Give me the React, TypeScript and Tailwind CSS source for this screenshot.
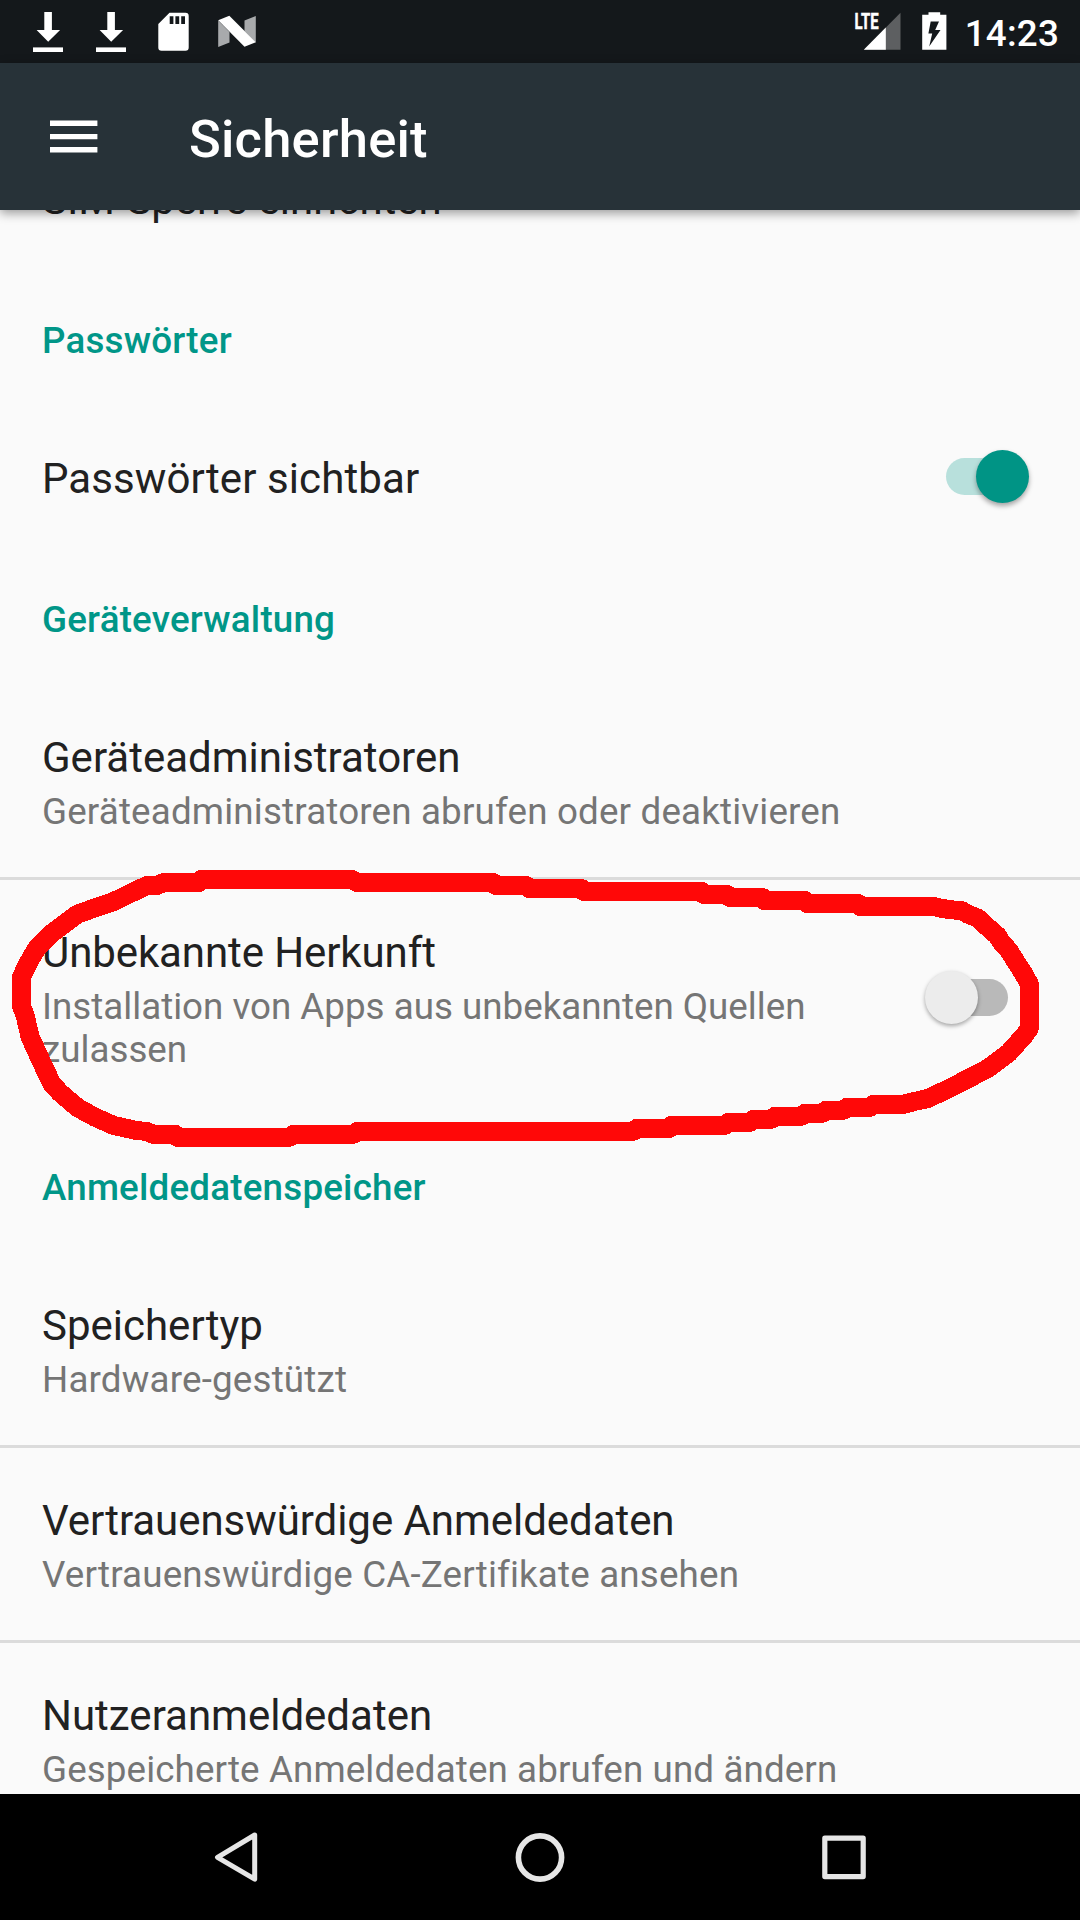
import React from "react";

function Download() {
  return (
    <svg className="h-[40px] w-[30px]" viewBox="0 0 30 40" fill="#fff">
      <path d="M11.3 0h7.6v18h8.2L15.2 29.8 3.6 18h7.7z" />
      <path d="M0 35.4h30v4.6H0z" />
    </svg>
  );
}

function StatusBar() {
  return (
    <header className="flex h-[63px] shrink-0 items-start bg-[#14181b] text-white">
      <div className="flex pt-3 pl-[33px]">
        <Download />
        <div className="ml-[33px]">
          <Download />
        </div>
        <svg className="ml-[32px] h-[39px] w-[31px]" viewBox="0 0 31 39">
          <path
            fill="#fff"
            fillRule="evenodd"
            d="M11.5.8H27.5Q30.7.8 30.7 4V35.5Q30.7 38.7 27.5 38.7H3.5Q.3 38.7.3 35.5V12zM11.7 4.3v7.8h3.7V4.3zM17.4 4.3v7.8h3.8V4.3zM23.2 4.3v7.8H27V4.3z"
          />
        </svg>
        <svg className="ml-[28px] h-[39px] w-[40px]" viewBox="0 0 40 39">
          <path fill="#a8aaac" d="M1.2 8.5 12.5 20V30.5L1.2 35zM38.8 4 27.5 8.5V19L38.8 30.5z" />
          <path fill="#fff" d="M1.2 8.3 12.3 3.8 38.8 30.3 27.5 34.8z" />
        </svg>
      </div>
      <div className="ml-auto flex">
        <svg className="mt-3 h-[40px] w-[48px] overflow-visible" viewBox="0 0 48 40">
          <path fill="#5d5f61" d="M46.5.8V37.7H9.8z" />
          <path fill="#fff" d="M31.8 15.5V37.7H9.8z" />
          <path fill="#14181b" d="M0 0h26v19H0z" />
          <text
            x="0.6"
            y="17.4"
            textLength="24"
            lengthAdjust="spacingAndGlyphs"
            fill="#fff"
            stroke="#fff"
            strokeWidth="0.5"
            fontFamily="Roboto, sans-serif"
            fontWeight="700"
            fontSize="22"
          >
            LTE
          </text>
        </svg>
        <svg className="mt-3 ml-[20px] h-[39px] w-[25px]" viewBox="0 0 25 39">
          <path
            fill="#fff"
            fillRule="evenodd"
            d="M6.5.2h11.7v2.6H24.4V37.8H.2V2.8H6.5zM8.7 9.5 6.4 21.5H10.2L7.2 34.5 18.5 18H13.2L17 9.5z"
          />
        </svg>
        <span className="mt-[12px] mr-[21px] ml-[18px] text-[36.75px] leading-[43px] font-medium tracking-[0.2px]">
          14:23
        </span>
      </div>
    </header>
  );
}

function Toggle({ on }: { on?: boolean }) {
  return (
    <div className={on ? "relative mr-[51px] h-[53px] w-[83px]" : "relative mr-[72px] h-[53px] w-[83px]"}>
      <div
        className={
          on
            ? "absolute top-2 left-0 h-[37px] w-[62px] rounded-full bg-[#b8e0dc]"
            : "absolute top-2 right-0 h-[37px] w-[62px] rounded-full bg-[#b9b9b9]"
        }
      />
      <div
        className={
          on
            ? "absolute top-0 right-0 size-[53px] rounded-full bg-[#009485] shadow-[0_3px_5px_rgba(0,0,0,0.35)]"
            : "absolute top-0 left-0 size-[53px] rounded-full bg-[#ececec] shadow-[0_2px_4px_rgba(0,0,0,0.35)]"
        }
      />
    </div>
  );
}

function Category({ children }: { children: React.ReactNode }) {
  return (
    <h2 className="h-[126px] shrink-0 pt-[42px] pl-[42px] text-[36.75px] leading-[43px] font-medium tracking-[0.2px] text-[#009688]">
      {children}
    </h2>
  );
}

function Preference({
  title,
  summary,
  divider,
  height,
  titleTracking = "",
  summaryTracking = "",
  children,
}: {
  title: string;
  summary?: string;
  divider?: boolean;
  height: string;
  titleTracking?: string;
  summaryTracking?: string;
  children?: React.ReactNode;
}) {
  return (
    <section
      className={`flex shrink-0 items-start justify-between ${height} ${divider ? "border-t-3 border-[#dbdbdb] pt-[45px]" : "pt-[48px]"}`}
    >
      <div className="w-[860px] pl-[42px]">
        <div className={`text-[42px] leading-[56px] text-[#212121] ${titleTracking}`}>{title}</div>
        {summary && (
          <div className={`mt-1 text-[36.75px] leading-[43px] text-[#757575] ${summaryTracking}`}>{summary}</div>
        )}
      </div>
      {children}
    </section>
  );
}

const MARK =
  "440,77 470,77 490,68 595,68 603,59 1058,59 1072,68 1480,68 1488,77 1580,77 1588,86 1745,86 1752,95 2106,95 2112,104 2182,104 2190,113 2288,113 2294,122 2415,122 2422,131 2575,131 2582,140 2805,140 2820,144 2850,149 2885,152 2905,163 2933,174 2961,200 2993,228 3003,245 3027,272 3047,304 3070,340 3088,372 3088,505 3074,525 3026,579 2964,625 2897,660 2838,690 2782,716 2745,724 2710,733 2620,733 2610,742 2540,742 2530,751 2478,751 2468,760 2415,760 2405,769 2325,769 2315,778 2260,778 2250,787 2185,787 2175,796 2015,796 2008,805 1910,805 1900,814 1072,814 1060,823 880,823 868,832 532,832 525,823 460,823 440,814 412,812 340,796 282,770 233,743 180,698 155,670 131,620 90,530 75,465 65,440 65,350 85,308 112,262 150,224 190,194 231,163 270,149 340,125 375,108";

export default function App() {
  return (
    <div className="relative flex h-[1920px] w-[1080px] flex-col overflow-hidden bg-[#fafafa] font-['Roboto',sans-serif]">
      <StatusBar />
      <div className="relative z-10 flex h-[147px] shrink-0 items-start bg-[#273238] shadow-[0_3px_10px_rgba(0,0,0,0.4)]">
        <svg className="mt-[57px] ml-[50px] h-[33px] w-[48px]" viewBox="0 0 48 33" fill="#fff">
          <path d="M0 .4h47.4v5.5H0zM0 13.9h47.4v5.4H0zM0 27h47.4v5.5H0z" />
        </svg>
        <h1 className="mt-[46px] ml-[91px] text-[52.5px] leading-[60px] font-medium tracking-[0.22px] text-white">
          Sicherheit
        </h1>
      </div>

      <main className="flex min-h-0 flex-1 flex-col overflow-hidden">
        <div className="-mt-[38px] h-[105px] shrink-0 pl-[42px] text-[42px] leading-[56px] tracking-[-0.05px] text-[#212121]">
          SIM-Sperre einrichten
        </div>
        <Category>Passwörter</Category>
        <Preference title="Passwörter sichtbar" height="h-[153px]" titleTracking="tracking-[0.1px]">
          <div className="-mt-px">
            <Toggle on />
          </div>
        </Preference>
        <Category>Geräteverwaltung</Category>
        <Preference
          title="Geräteadministratoren"
          summary="Geräteadministratoren abrufen oder deaktivieren"
          height="h-[195px]"
          summaryTracking="tracking-[0.17px]"
        />
        <Preference
          title="Unbekannte Herkunft"
          summary="Installation von Apps aus unbekannten Quellen zulassen"
          height="h-[247px]"
          titleTracking="tracking-[-0.1px]"
          divider
        >
          <div className="mt-[46px]">
            <Toggle />
          </div>
        </Preference>
        <Category>Anmeldedatenspeicher</Category>
        <Preference
          title="Speichertyp"
          summary="Hardware-gestützt"
          height="h-[195px]"
          summaryTracking="tracking-[0.18px]"
        />
        <Preference
          title="Vertrauenswürdige Anmeldedaten"
          summary="Vertrauenswürdige CA-Zertifikate ansehen"
          height="h-[195px]"
          titleTracking="tracking-[-0.05px]"
          summaryTracking="tracking-[0.17px] [font-variant-ligatures:common-ligatures]"
          divider
        />
        <Preference
          title="Nutzeranmeldedaten"
          summary="Gespeicherte Anmeldedaten abrufen und ändern"
          height="h-[195px]"
          summaryTracking="tracking-[0.11px]"
          divider
        />
      </main>

      <nav className="flex h-[126px] shrink-0 items-center bg-black pl-[203px]">
        <svg className="size-[66px]" viewBox="0 0 66 66" fill="none" stroke="#e6e6e6" strokeWidth="5" strokeLinejoin="round">
          <path d="M51.7 11 14.5 33.3 51.7 55.2z" />
        </svg>
        <svg className="ml-[238px] size-[66px]" viewBox="0 0 66 66" fill="none" stroke="#e6e6e6" strokeWidth="5.6">
          <circle cx="33" cy="33.5" r="21.6" />
        </svg>
        <svg className="ml-[238px] size-[66px]" viewBox="0 0 66 66" fill="none" stroke="#e6e6e6" strokeWidth="5.2" strokeLinejoin="round">
          <path d="M13.8 14.2h38.4v38.4H13.8z" />
        </svg>
      </nav>

      <svg className="absolute top-[860px] left-0 h-[300px] w-[1080px]" viewBox="0 0 3240 900" shapeRendering="crispEdges">
        <polygon points={MARK} fill="none" stroke="#ff0808" strokeWidth="57" strokeLinejoin="round" />
      </svg>
    </div>
  );
}
